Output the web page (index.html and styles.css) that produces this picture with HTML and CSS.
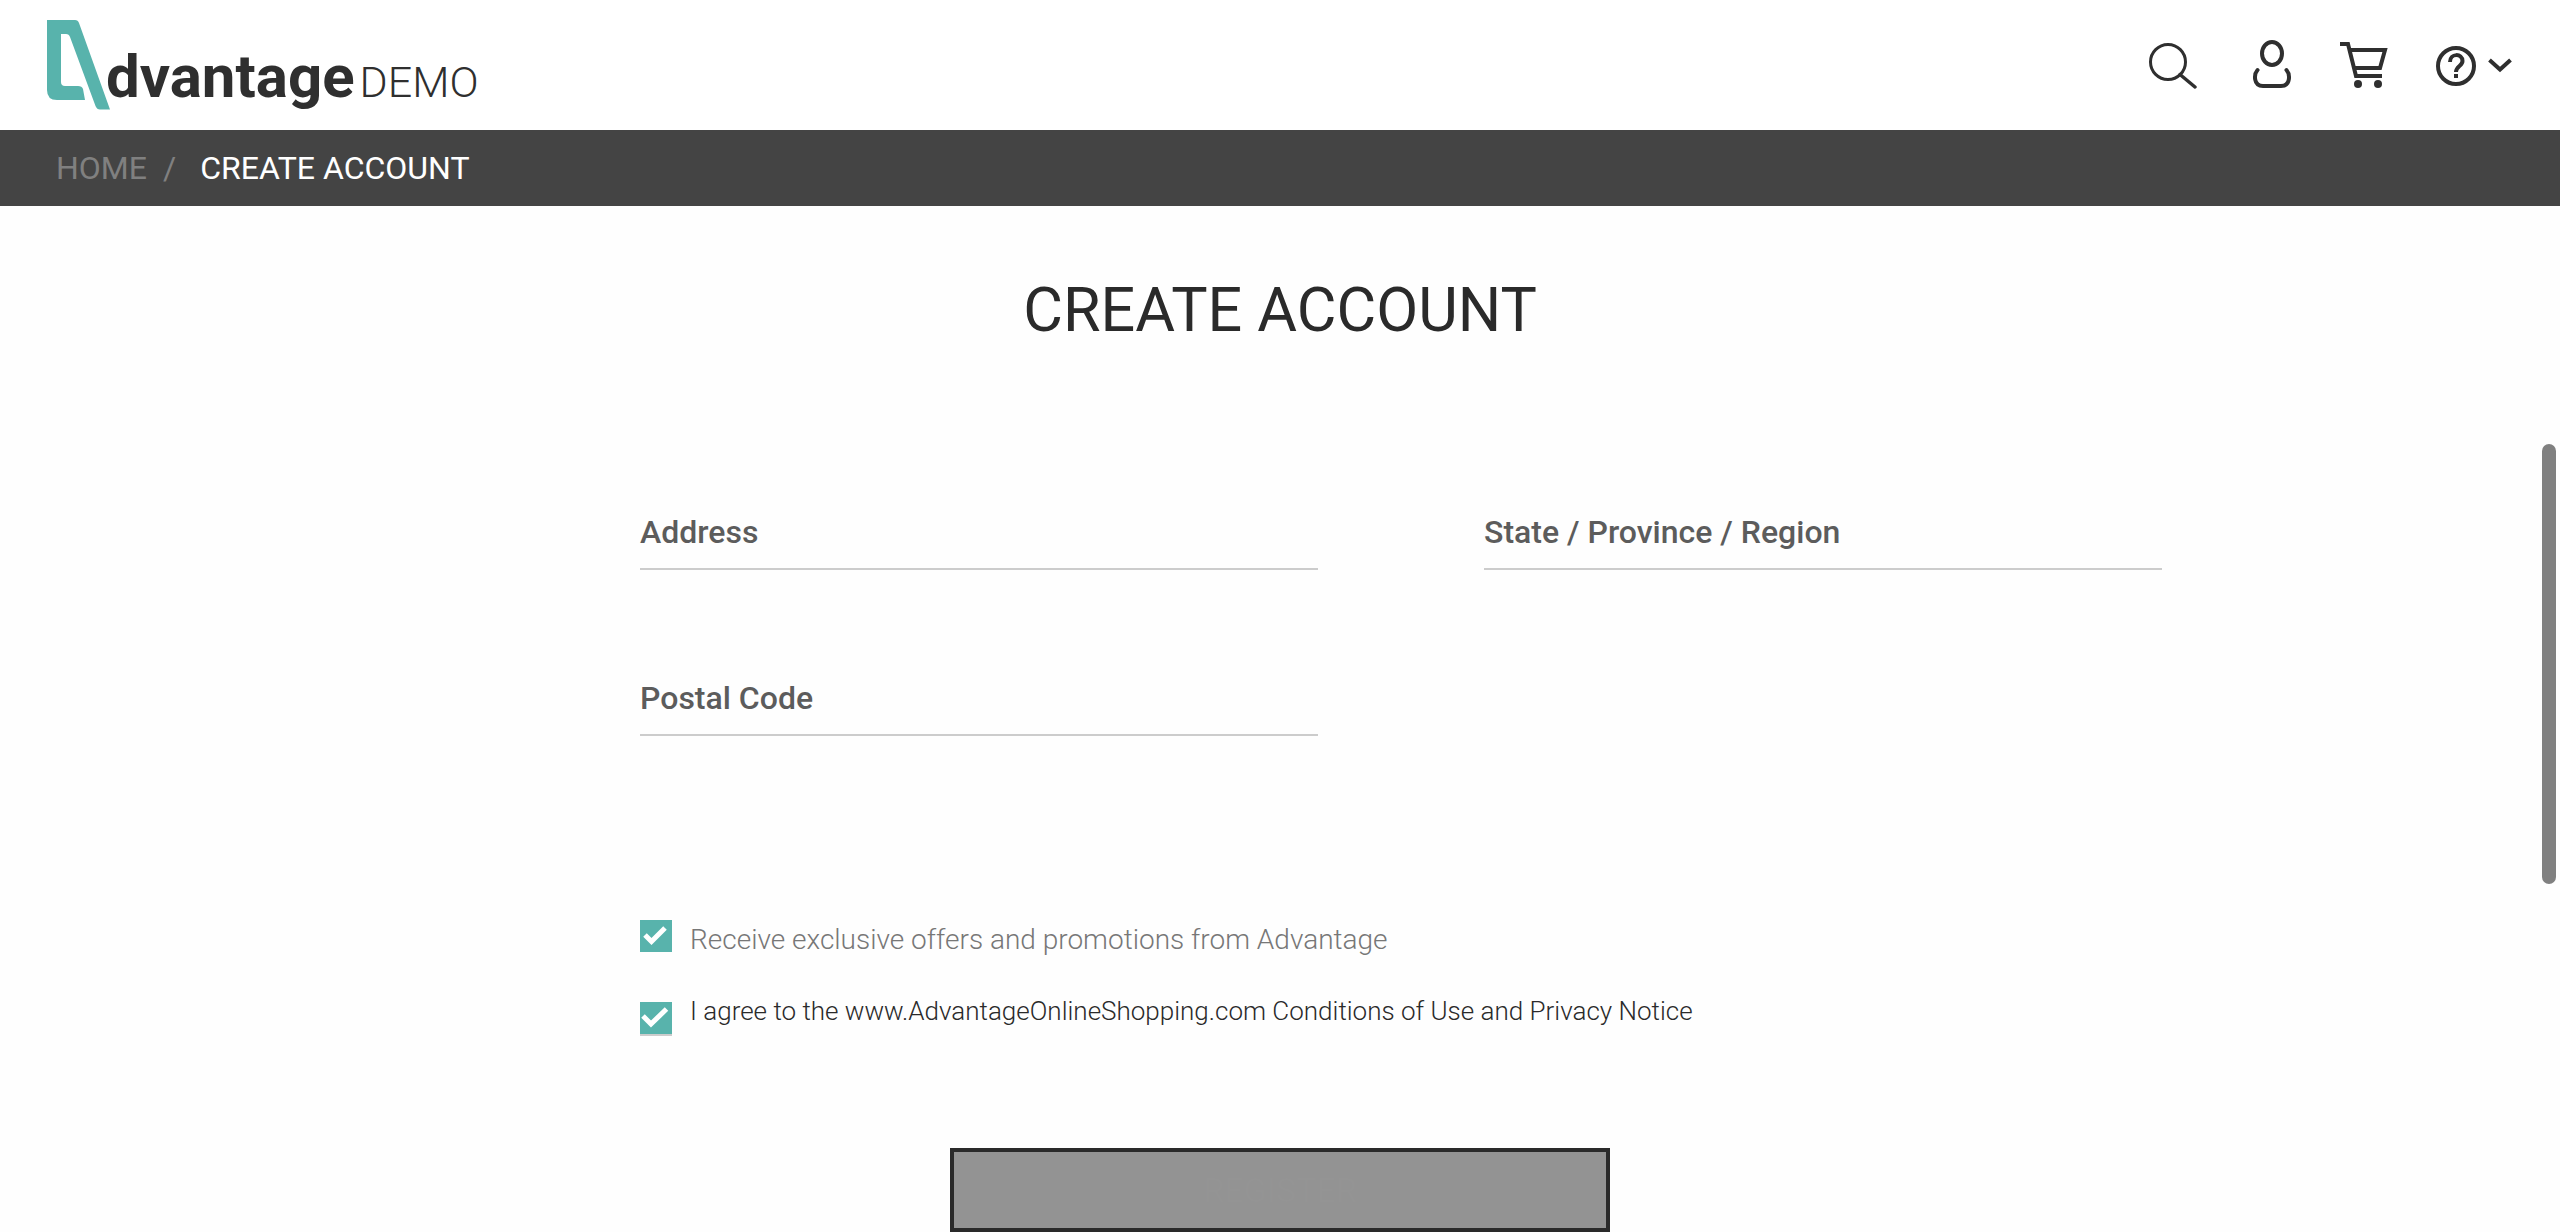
FILE: index.html
```html
<!DOCTYPE html>
<html lang="en">
<head>
<meta charset="utf-8">
<meta name="viewport" content="width=device-width, initial-scale=1">
<title>Advantage DEMO - Create Account</title>
<link rel="stylesheet" href="styles.css">
</head>
<body>
<header class="header">
  <a class="logo" href="#">
    <svg class="logo-mark" viewBox="0 0 63 90" aria-hidden="true"><path fill="#58b3ac" d="M0 0H28Q31 0 32 3L63 89.500H53Q50 89.500 48.500 86L23 17Q22 14 19 14H14V62Q14 66 18 66H31Q35 66 36 69L38 80H10Q0 80 0 70Z"/></svg>
    <span class="logo-name">dvantage</span>
    <span class="logo-demo">DEMO</span>
  </a>
  <nav class="tools" aria-label="Tools">
    <a class="tool" href="#" aria-label="Search"><svg width="56" height="50" viewBox="0 0 56 50"><g fill="none" stroke="#2f2f2f"><circle cx="20" cy="23" r="17.500" stroke-width="3"/><path d="M32 35.500L47 48" stroke-width="3.500" stroke-linecap="round"/></g></svg></a>
    <a class="tool" href="#" aria-label="User"><svg width="40" height="50" viewBox="0 0 40 50"><g fill="none" stroke="#2f2f2f" stroke-width="4" stroke-linecap="round"><ellipse cx="20" cy="14.500" rx="10" ry="11.500"/><path d="M5.500 31C2 35 1 47 11 47H29C39 47 38 35 34.500 31"/></g></svg></a>
    <a class="tool" href="#" aria-label="Cart"><svg width="48" height="50" viewBox="0 0 48 50"><g fill="none" stroke="#2f2f2f" stroke-width="4"><path d="M0 5H8L16 37H42M10 11H45L40 29H15"/></g><g fill="#2f2f2f"><circle cx="18" cy="45" r="4"/><circle cx="38" cy="45" r="4"/></g></svg></a>
    <a class="tool" href="#" aria-label="Help"><svg width="76" height="50" viewBox="0 0 76 50"><g fill="none" stroke="#2f2f2f" stroke-width="4"><circle cx="20" cy="27" r="18"/><path d="M14 23C14 14 26.500 14 26.500 22C26.500 27 20 27 20 33"/><path d="M53.500 21L64 30.500L74.500 21"/></g><path fill="#2f2f2f" d="M18 35h4v4h-4z"/></svg></a>
  </nav>
</header>
<nav class="breadcrumb" aria-label="Breadcrumb">
  <a class="crumb" href="#">HOME</a>
  <span class="crumb-divider">/</span>
  <span class="crumb-current">CREATE ACCOUNT</span>
</nav>
<main>
  <h1 class="title">CREATE ACCOUNT</h1>
  <form class="form">
    <div class="fields">
      <div class="field"><input id="address" type="text"><label for="address">Address</label></div>
      <div class="field"><input id="state" type="text"><label for="state">State / Province / Region</label></div>
      <div class="field"><input id="postal" type="text"><label for="postal">Postal Code</label></div>
    </div>
    <div class="option">
      <input class="check" id="offers" type="checkbox" checked>
      <label class="offers-label" for="offers">Receive exclusive offers and promotions from Advantage</label>
    </div>
    <div class="option option-agree">
      <input class="check check-agree" id="agree" type="checkbox" checked>
      <label class="agree-label" for="agree">I agree to the www.AdvantageOnlineShopping.com Conditions of Use and Privacy Notice</label>
    </div>
    <button class="register" type="button">REGISTER</button>
  </form>
</main>
<div class="scroll-thumb" aria-hidden="true"></div>
</body>
</html>
```
FILE: styles.css
```css
* { box-sizing: border-box; }

body {
  margin: 0;
  background: #fefefe;
  color: #2a2a2a;
  font-family: Roboto, "Liberation Sans", sans-serif;
  font-size: 32px;
}

a { color: inherit; text-decoration: none; }

.header {
  display: flex;
  justify-content: space-between;
  height: 130px;
  padding: 0 48px 0 47px;
  background: #fff;
}

.logo { display: flex; align-items: baseline; color: #2f2f2f; line-height: 130px; }
.logo-mark { align-self: flex-start; width: 63px; height: 90px; margin-top: 20px; margin-right: -4px; }
.logo-name { padding-top: 12px; font-size: 60px; font-weight: 700; }
.logo-demo { margin-left: 5px; font-size: 43px; font-weight: 300; }

.tools { display: flex; padding-top: 39px; gap: 48px; }
.tool { display: block; height: 50px; }
.tool svg { display: block; }

.breadcrumb {
  display: flex;
  align-items: center;
  height: 76px;
  padding: 0 56px;
  background: #444;
  color: #fff;
}
.crumb, .crumb-divider { color: #808080; }
.crumb-divider { margin: 0 24px 0 16px; }

.title {
  margin: 68px 0 142px;
  font-size: 61px;
  line-height: 72px;
  font-weight: 400;
  text-align: center;
}

.form { display: flex; flex-direction: column; }
.fields {
  display: grid;
  grid-template-columns: 1fr 1fr;
  gap: 84px 166px;
  margin: 0 398px 184px 25%;
}
.field { display: grid; }
.field input, .field label { grid-area: 1 / 1; }
.field input {
  width: 100%;
  height: 82px;
  padding: 0;
  border: 0;
  border-bottom: 2px solid #ccc;
  background: none;
  font: inherit;
}
.field label {
  align-self: end;
  padding-bottom: 18px;
  color: #5c5c5c;
  font-weight: 500;
  line-height: 40px;
  pointer-events: none;
}

.option { display: flex; gap: 18px; margin-left: 25%; }
.option-agree { margin-top: 30px; }
.check {
  appearance: none;
  flex: none;
  width: 32px;
  height: 32px;
  margin: 0;
  background: #58b3ac url("data:image/svg+xml,%3Csvg xmlns='http://www.w3.org/2000/svg' viewBox='0 0 32 32'%3E%3Cpath d='M5 15l6.500 6.500L25 8' fill='none' stroke='white' stroke-width='5'/%3E%3C/svg%3E") no-repeat 0 0 / 32px 32px;
}
.check-agree {
  height: 34px;
  margin-top: 12px;
  border-bottom: 2px solid #ccc;
  background-image: url("data:image/svg+xml,%3Csvg xmlns='http://www.w3.org/2000/svg' viewBox='0 0 32 32'%3E%3Cpath d='M3 14l8 8L26.500 7' fill='none' stroke='white' stroke-width='5'/%3E%3C/svg%3E");
}
.offers-label { color: #777; font-size: 28px; font-weight: 300; line-height: 40px; }
.agree-label { font-size: 26px; font-weight: 300; line-height: 42px; }

.register {
  align-self: center;
  width: 660px;
  max-width: 100%;
  height: 84px;
  margin-top: 112px;
  border: 4px solid #2a2a2a;
  background: #939393;
  color: #949494;
  font: 400 34px Roboto, "Liberation Sans", sans-serif;
}

/* Overlay scroll indicator */
.scroll-thumb {
  position: fixed;
  top: 36%;
  right: 4px;
  width: 14px;
  height: 440px;
  border-radius: 7px;
  background: #808080;
}
```
